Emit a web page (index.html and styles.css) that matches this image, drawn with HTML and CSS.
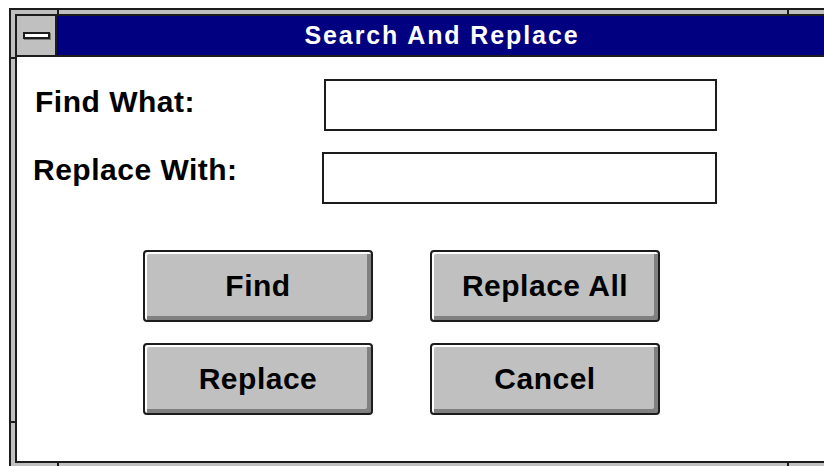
FILE: index.html
```html
<!DOCTYPE html>
<html lang="en">
<head>
<meta charset="utf-8">
<title>Search And Replace</title>
<link rel="stylesheet" href="styles.css">
</head>
<body>
  <div class="window">
    <!-- sizing-border corner marks -->
    <span class="notch notch-top notch-x1"></span>
    <span class="notch notch-top notch-x2"></span>
    <span class="notch notch-bottom notch-x1"></span>
    <span class="notch notch-bottom notch-x2"></span>
    <span class="notch notch-left notch-y1"></span>
    <span class="notch notch-left notch-y2"></span>

    <div class="pane">
      <div class="titlebar">
        <div class="sysmenu"><span class="sysmenu-bar"></span></div>
        <div class="caption">Search And Replace</div>
      </div>

      <div class="client">
        <div class="fields">
          <label class="field-label label-find" for="find">Find What:</label>
          <input class="field-input input-find" id="find" type="text">
          <label class="field-label label-replace" for="replace">Replace With:</label>
          <input class="field-input input-replace" id="replace" type="text">
        </div>

        <div class="buttons">
          <button class="btn" type="button">Find</button>
          <button class="btn" type="button">Replace All</button>
          <button class="btn" type="button">Replace</button>
          <button class="btn" type="button">Cancel</button>
        </div>
      </div>
    </div>
  </div>
</body>
</html>
```

FILE: styles.css
```css
* {
  box-sizing: border-box;
}

html,
body {
  margin: 0;
  padding: 0;
  background: #ffffff;
  overflow: hidden;
}

body {
  width: 824px;
  height: 466px;
  font-family: "Liberation Sans", Arial, sans-serif;
  font-weight: bold;
  color: #000000;
}

/* Sizable window frame: dark line, grey band, dark line */
.window {
  position: relative;
  margin: 8px 0 0 9px;
  width: 826px;
  height: 461px;
  border: 2px solid #1c1c1c;
  padding: 4px;
  background: #c0c0c0;
  display: flex;
}

.notch {
  position: absolute;
  background: #1c1c1c;
}

.notch-top,
.notch-bottom {
  width: 2px;
  height: 4px;
}

.notch-top { top: 0; }
.notch-bottom { bottom: 0; }
.notch-x1 { left: 46px; }
.notch-x2 { left: 776px; }

.notch-left {
  left: 0;
  width: 4px;
  height: 2px;
}

.notch-y1 { top: 47px; }
.notch-y2 { top: 411px; }

.pane {
  flex: 1;
  border: 2px solid #1c1c1c;
  background: #ffffff;
  display: flex;
  flex-direction: column;
}

/* Title bar */
.titlebar {
  display: flex;
  height: 41px;
  border-bottom: 2px solid #1c1c1c;
  background: #000080;
}

.sysmenu {
  width: 40px;
  border-right: 2px solid #1c1c1c;
  background: #c0c0c0;
  display: flex;
  align-items: center;
  justify-content: center;
  padding-left: 1px;
}

.sysmenu-bar {
  display: block;
  width: 27px;
  height: 7px;
  border: 2px solid #1c1c1c;
  background: #ffffff;
  box-shadow: 1px 1px 0 #7a7a7a;
}

.caption {
  flex: 1;
  color: #ffffff;
  font-size: 25px;
  line-height: 39px;
  letter-spacing: 1.9px;
  text-align: center;
  white-space: nowrap;
}

/* Dialog body */
.client {
  flex: 1;
  padding: 22px 0 0 18px;
}

.fields {
  display: grid;
  grid-template-columns: 288px 394px;
  row-gap: 21px;
}

.field-label {
  font-size: 30px;
  line-height: 34px;
  letter-spacing: 0.5px;
  white-space: nowrap;
  align-self: start;
}

.label-find {
  margin-top: 6px;
}

.label-replace {
  margin-top: 1px;
  margin-left: -2px;
}

.field-input {
  display: block;
  width: 394px;
  height: 52px;
  margin: 0;
  padding: 0 6px;
  border: 2px solid #1c1c1c;
  background: #ffffff;
  font: inherit;
  font-size: 24px;
  outline: none;
}

.input-find {
  margin-left: 1px;
  width: 393px;
}

.input-replace {
  margin-left: -1px;
  width: 395px;
}

.buttons {
  display: grid;
  grid-template-columns: 230px 230px;
  grid-auto-rows: 72px;
  column-gap: 57px;
  row-gap: 21px;
  margin: 46px 0 0 108px;
}

/* Raised push button */
.btn {
  margin: 0;
  padding: 0;
  border: 2px solid #1c1c1c;
  border-radius: 4px;
  background: #c0c0c0;
  box-shadow: inset 2px 2px 0 #ffffff, inset -4px -4px 0 #808080;
  font: inherit;
  font-size: 30px;
  line-height: 34px;
  letter-spacing: 0.5px;
  color: #000000;
  text-align: center;
}
```
